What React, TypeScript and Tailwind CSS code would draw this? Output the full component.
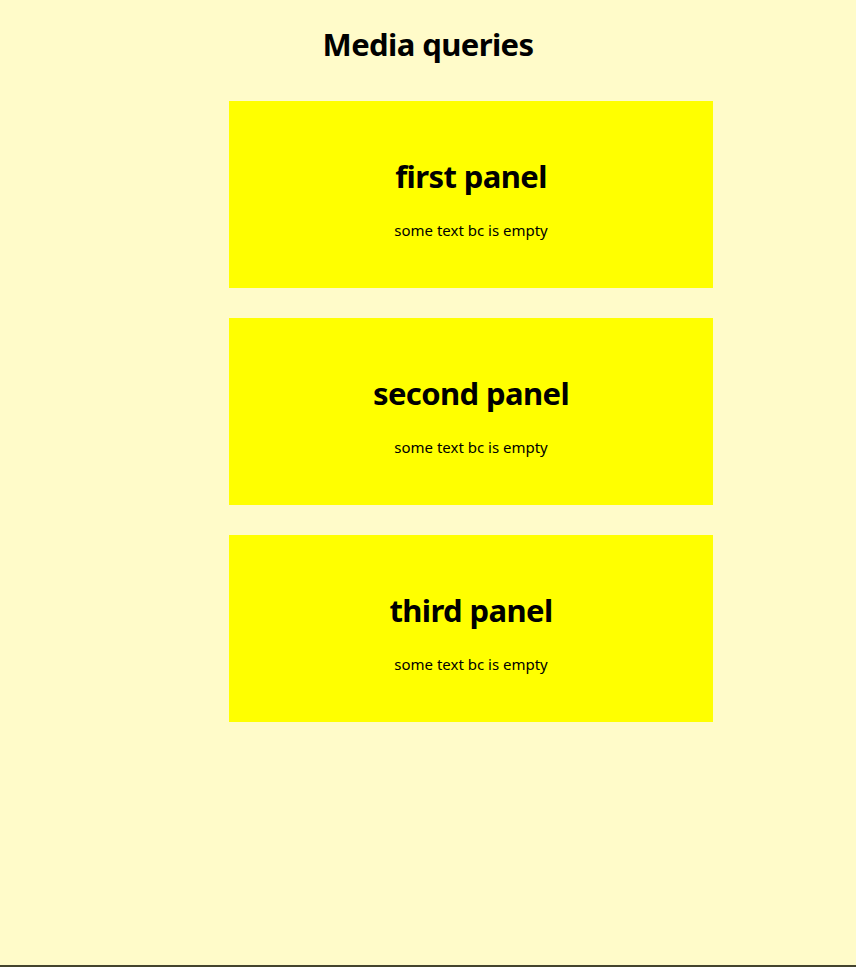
import React from 'react';

const PANELS = ['first panel', 'second panel', 'third panel'];

export default function App() {
  return (
    <div className="min-h-[967px] bg-[#fffbc9] flex flex-col text-black font-['Noto_Sans',sans-serif]">
      <h1 className="text-center text-[31px] font-bold leading-none pt-[29px] tracking-[-0.6px]">Media queries</h1>

      <div className="flex flex-col gap-[30px] pl-[229px] pt-[41px]">
        {PANELS.map((title) => (
          <div key={title} className="w-[484px] h-[187px] bg-[#ffff00] flex flex-col items-center pt-[60px]">
            <h2 className="text-[31px] font-bold leading-none tracking-[-0.6px]">{title}</h2>
            <p className="text-[15px] leading-none mt-[31px]">some text bc is empty</p>
          </div>
        ))}
      </div>

      <div className="flex-1" />
      <div className="h-[2px] bg-[#44442e]" />
    </div>
  );
}
